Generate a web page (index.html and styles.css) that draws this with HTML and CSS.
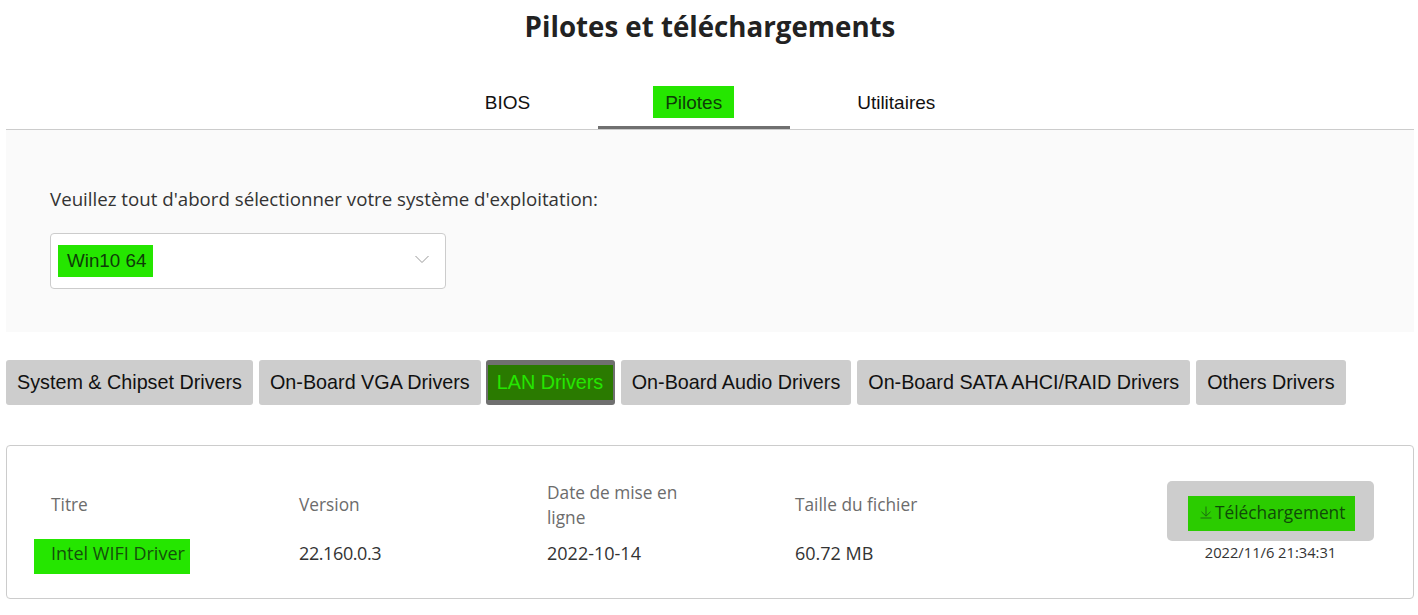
FILE: index.html
```html
<!DOCTYPE html>
<html lang="fr">
<head>
<meta charset="utf-8">
<title>Pilotes et téléchargements</title>
<link rel="stylesheet" href="styles.css">
</head>
<body>
<main class="page">
  <h1 class="title">Pilotes et téléchargements</h1>
  <nav class="tabs">
    <a class="tab">BIOS</a>
    <a class="tab tab-active"><span class="mark mark-tab">Pilotes</span></a>
    <a class="tab">Utilitaires</a>
  </nav>
  <section class="panel">
    <p class="panel-label">Veuillez tout d'abord sélectionner votre système d'exploitation:</p>
    <div class="select">
      <span class="mark mark-select">Win10 64</span>
      <svg class="chevron" width="16" height="9" viewBox="0 0 16 9" aria-hidden="true"><path d="M1.5 1 L8 7.5 L14.5 1" fill="none" stroke="#999" stroke-width="1"/></svg>
    </div>
  </section>
  <div class="cats">
    <button class="cat">System &amp; Chipset Drivers</button>
    <button class="cat">On-Board VGA Drivers</button>
    <button class="cat cat-active"><span class="cat-mark">LAN Drivers</span></button>
    <button class="cat">On-Board Audio Drivers</button>
    <button class="cat">On-Board SATA AHCI/RAID Drivers</button>
    <button class="cat">Others Drivers</button>
  </div>
  <section class="card">
    <div class="head">Titre</div>
    <div class="head">Version</div>
    <div class="head head-date">Date de mise en ligne</div>
    <div class="head">Taille du fichier</div>
    <div class="action">
      <button class="dl">
        <span class="dl-mark">
          <svg class="dl-icon" width="14" height="14" viewBox="0 0 14 14" aria-hidden="true"><path d="M7 1.5 V11 M2.5 6.8 L7 11.2 L11.5 6.8 M1.5 13 H12.5" fill="none" stroke="#1c6b10" stroke-width="1"/></svg>Téléchargement
        </span>
      </button>
      <div class="stamp">2022/11/6 21:34:31</div>
    </div>
    <div class="val"><span class="mark mark-name">Intel WIFI Driver</span></div>
    <div class="val val-version">22.160.0.3</div>
    <div class="val">2022-10-14</div>
    <div class="val">60.72 MB</div>
  </section>
</main>
</body>
</html>
```

FILE: styles.css
```css
* { box-sizing: border-box; }
html, body { margin: 0; background: #fff; }
body { font-family: "Open Sans", "Noto Sans", sans-serif; color: #212529; overflow: hidden; }
.page { padding: 0 4px 0 6px; height: 615px; }
.title { margin: 0; padding-top: 7px; height: 82px; font-size: 27.7px; line-height: 39px; font-weight: 700; text-align: center; color: #222; }
.tabs { display: flex; justify-content: center; height: 48px; border-bottom: 1px solid #ccc; font-family: "Liberation Sans", Arial, sans-serif; font-size: 19px; color: #111; }
.tab { padding: 0 67.5px; height: 47px; line-height: 42px; }
.tab-active { border-bottom: 3px solid #707070; height: 47px; }
.mark { background: #25e600; color: #222; }
.mark-tab { display: inline-block; padding: 0 12px; height: 32px; line-height: 33px; margin: 4px -12px 0; vertical-align: top; color: #0e3c08; }
.panel { height: 202px; padding: 57px 44px 0; background: #fafafa; }
.panel-label { margin: 0 0 22px; font-size: 18.7px; line-height: 24px; color: #333; }
.select { display: flex; align-items: center; justify-content: space-between; width: 396px; height: 56px; padding: 0 15px 0 7px; background: #fff; border: 1px solid #ccc; border-radius: 4px; font-family: "Liberation Sans", Arial, sans-serif; font-size: 18.8px; }
.mark-select { display: inline-block; height: 32px; line-height: 32px; padding: 0 7px 0 9px; color: #0e3c08; }
.chevron { margin-bottom: 3px; }
.cats { display: flex; gap: 6px; margin-top: 28px; }
.cat { height: 45px; padding: 0 11px; border: 0; border-radius: 3px; background: #cdcdcd; font-family: "Liberation Sans", Arial, sans-serif; font-size: 19.75px; color: #111; white-space: nowrap; }
.cat-active { padding: 5px 2px; margin-left: -1px; background: #707070; }
.cat-mark { display: block; height: 35px; line-height: 34px; padding: 0 9.5px 0 9px; background: #2a7a00; color: #25e600; }
.card { display: grid; grid-template-columns: 248px 248px 248px 248px 1fr; grid-template-rows: 68px auto; width: 1408px; height: 154px; margin-top: 40px; padding: 24px 39px 0 44px; border: 1px solid #ccc; border-radius: 4px; font-size: 18px; }
.head { align-self: center; color: #6c6c6c; font-size: 17.3px; line-height: 25px; }
.head-date { width: 150px; padding-top: 2px; }
.val { color: #333; line-height: 24px; padding-top: 3px; }
.val-version { letter-spacing: -0.4px; }
.action { grid-column: 5; grid-row: 1 / span 2; justify-self: end; display: flex; flex-direction: column; align-items: center; margin-top: 11px; }
.dl { display: flex; align-items: center; justify-content: center; width: 207px; height: 60px; border: 0; border-radius: 5px; background: #cdcdcd; font-family: "Open Sans", "Noto Sans", sans-serif; font-size: 17.3px; color: #0f4a08; }
.dl-mark { display: flex; align-items: center; width: 167px; height: 35px; margin: 4px 0 0 2px; padding: 0 0 2px 11px; background: #2bcc00; white-space: nowrap; }
.dl-icon { margin-right: 2px; }
.stamp { margin-top: 1px; font-size: 14.7px; line-height: 20px; color: #333; }
.mark-name { display: inline-block; height: 35px; line-height: 29px; padding: 0 5px 0 17px; margin-left: -17px; margin-top: -2px; vertical-align: top; color: #14500b; }
```
